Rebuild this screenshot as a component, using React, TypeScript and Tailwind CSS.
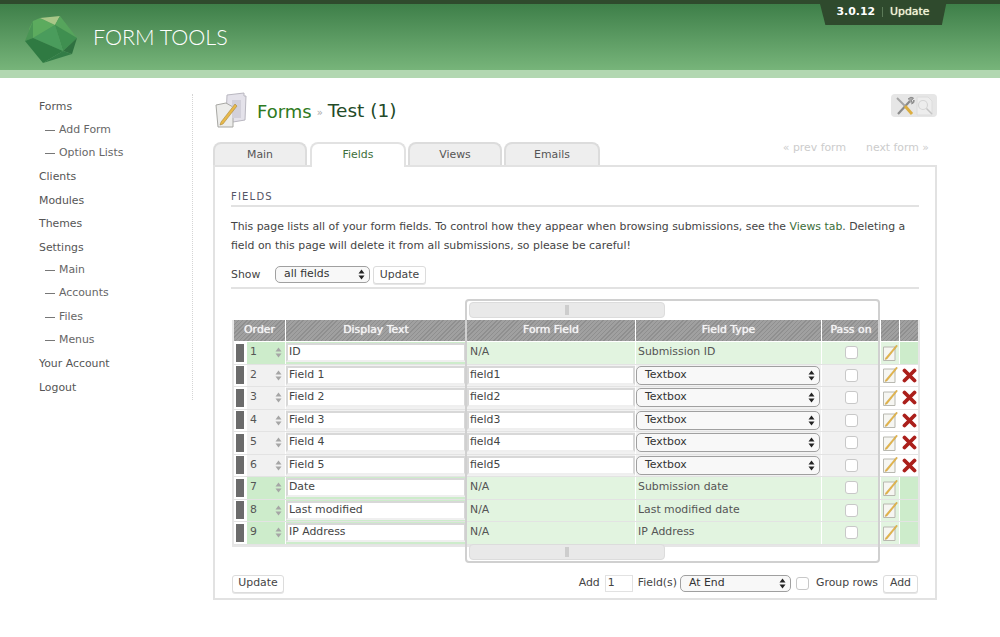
const font = "font-['DejaVu_Sans','Liberation_Sans',sans-serif]";

const navItems = [
  { label: "Forms", sub: false },
  { label: "Add Form", sub: true },
  { label: "Option Lists", sub: true },
  { label: "Clients", sub: false },
  { label: "Modules", sub: false },
  { label: "Themes", sub: false },
  { label: "Settings", sub: false },
  { label: "Main", sub: true },
  { label: "Accounts", sub: true },
  { label: "Files", sub: true },
  { label: "Menus", sub: true },
  { label: "Your Account", sub: false },
  { label: "Logout", sub: false },
];

const rows = [
  { order: 1, text: "ID", field: "N/A", type: "Submission ID", core: true },
  { order: 2, text: "Field 1", field: "field1", type: "Textbox", core: false },
  { order: 3, text: "Field 2", field: "field2", type: "Textbox", core: false },
  { order: 4, text: "Field 3", field: "field3", type: "Textbox", core: false },
  { order: 5, text: "Field 4", field: "field4", type: "Textbox", core: false },
  { order: 6, text: "Field 5", field: "field5", type: "Textbox", core: false },
  { order: 7, text: "Date", field: "N/A", type: "Submission date", core: true },
  { order: 8, text: "Last modified", field: "N/A", type: "Last modified date", core: true },
  { order: 9, text: "IP Address", field: "N/A", type: "IP Address", core: true },
];

const gridCols = "grid grid-cols-[12px_38px_180px_168px_185px_58px_18px_18px] gap-x-[1px]";
const hatch = "bg-[repeating-linear-gradient(135deg,#8f8f8f_0px,#8f8f8f_1px,#a0a0a0_1px,#a0a0a0_3px)]";

const tabs = [
  { label: "Main", className: "mr-[3px] h-[23px] w-[94px] border-[#dcdcdc] bg-[#eeeeee] pt-[2px] text-[#555]" },
  { label: "Fields", className: "relative z-10 -mb-[2px] mr-[2px] h-[25px] w-[96px] border-[#e2e2e2] bg-white text-[#3c6e3a]" },
  { label: "Views", className: "mr-[2px] h-[23px] w-[94px] border-[#dcdcdc] bg-[#eeeeee] pt-[2px] text-[#555]" },
  { label: "Emails", className: "h-[23px] w-[96px] border-[#dcdcdc] bg-[#eeeeee] pt-[2px] text-[#555]" },
];

function Logo() {
  return (
    <svg width="54" height="48" viewBox="0 0 54 48" className="mt-[4px]">
      <polygon points="9,6 16,3 31,10 9,23 5,14" fill="#5cab5e" />
      <polygon points="16,3 36,1 31,10" fill="#a9c788" />
      <polygon points="36,1 53,23 31,10" fill="#56a45c" />
      <polygon points="31,10 53,23 39,36" fill="#3f8f50" />
      <polygon points="31,10 39,36 9,23" fill="#4a9c5c" />
      <polygon points="53,23 48,39 39,36" fill="#2f7140" />
      <polygon points="9,6 9,23 1,26" fill="#4a9555" />
      <polygon points="1,26 9,23 39,36 19,48" fill="#2f7a42" />
      <polygon points="19,48 39,36 48,39" fill="#327c46" />
    </svg>
  );
}

function FormsIcon() {
  return (
    <svg width="36" height="36" viewBox="0 0 36 36">
      <polygon points="14,3 31,1 31,4 33,4 32,28 20,30 13,26" fill="#e4e2ea" stroke="#b9b7c0" />
      <polygon points="3,13 13,11 20,15 20,35 5,35" fill="#ececea" stroke="#a8a8a4" />
      <rect x="19" y="8" width="9" height="18" fill="#d2d0da" />
      <polygon points="8,30 22,12 24,14 10,32 7,33" fill="#e8b94a" stroke="#9c7a2c" strokeWidth="0.5" />
    </svg>
  );
}

function EditIcon() {
  return (
    <svg width="17" height="18" viewBox="0 0 17 18">
      <polygon points="1.5,3 13,3 13,16.5 1.5,16.5" fill="#f6f6f2" stroke="#b8b8b0" />
      <polygon points="3.5,14 14.5,1 15.5,2 5,15 3,15.5" fill="#e6b547" stroke="#b08a35" strokeWidth="0.3" />
    </svg>
  );
}

function DeleteIcon() {
  return (
    <svg width="15" height="15" viewBox="0 0 15 15">
      <path d="M2.5 2.5 L12.5 12.5 M12.5 2.5 L2.5 12.5" stroke="#ab1f1b" strokeWidth="3.8" strokeLinecap="round" />
    </svg>
  );
}

function ToolsIcon() {
  return (
    <svg width="20" height="20" viewBox="0 0 20 20">
      <path d="M3 18 L15 5" stroke="#8a8a8a" strokeWidth="2.2" />
      <path d="M13 3 Q16 0 18.5 2 L16 5 L17.5 6.5 L19 4 Q20 7 16.5 8" stroke="#8a8a8a" strokeWidth="1" fill="#a8a8a8" />
      <path d="M2 2 L10 10" stroke="#a5a5a5" strokeWidth="2" />
      <path d="M10 10 L17 18" stroke="#dcae3f" strokeWidth="3" />
    </svg>
  );
}

function SearchIcon() {
  return (
    <svg width="19" height="20" viewBox="0 0 19 20">
      <polygon points="2,1 13,1 17,5 17,19 2,19" fill="#ededed" stroke="#dcdcdc" />
      <circle cx="8" cy="9" r="4.5" fill="none" stroke="#d5d5d5" strokeWidth="1.2" />
      <path d="M11.5 12.5 L17 18" stroke="#c4c4c4" strokeWidth="1.5" />
    </svg>
  );
}

function SelectArrows({ color = "#222" }: { color?: string }) {
  return (
    <svg width="7" height="11" viewBox="0 0 7 11" className="shrink-0">
      <polygon points="3.5,0.5 6.5,4.5 0.5,4.5" fill={color} />
      <polygon points="3.5,10.5 6.5,6.5 0.5,6.5" fill={color} />
    </svg>
  );
}

function SelectBox({ label, className }: { label: string; className: string }) {
  return (
    <div className={`flex items-center justify-between rounded-[5px] border border-[#a0a0a0] bg-[#f8f8f8] pl-[8px] pr-[4px] text-[#333] ${className}`}>
      <span>{label}</span>
      <SelectArrows />
    </div>
  );
}

function Checkbox() {
  return <div className="h-[13px] w-[13px] rounded-[3px] border border-[#c8c8c8] bg-white" />;
}

function SmallButton({ label, className = "" }: { label: string; className?: string }) {
  return (
    <div className={`flex h-[18px] items-center justify-center rounded-[3px] border border-[#dcdcdc] bg-white text-[#444] shadow-[0_1px_0_#e6e6e6] ${className}`}>
      {label}
    </div>
  );
}

function Sidebar() {
  return (
    <nav className="mt-[16px] flex h-[306px] w-[193px] shrink-0 flex-col border-r border-dotted border-[#d5d5d5] pl-[39px] pt-[2px]">
      {navItems.map((item) => (
        <div key={item.label} className={`flex h-[23.5px] items-center ${item.sub ? "pb-[2px] text-[#666]" : "text-[#555]"}`}>
          {item.sub && <span className="mr-[4px] ml-[6px] h-[1px] w-[10px] bg-[#777]" />}
          {item.label}
        </div>
      ))}
    </nav>
  );
}

function FieldRow({ row }: { row: (typeof rows)[number] }) {
  const bg = row.core ? "bg-[#e2f4e0]" : "bg-[#f1f1f1]";
  const sideBg = row.core ? "bg-[#cdeccb]" : "bg-[#f1f1f1]";
  return (
    <div className={`${gridCols} h-[22.5px] border-b border-[#e3e3e3] text-[#555]`}>
      <div className="flex items-center justify-center bg-white">
        <div className="h-[18px] w-[8px] bg-[#6b6b6b]" />
      </div>
      <div className={`flex items-center justify-between pl-[3px] pr-[3px] ${sideBg}`}>
        <span>{row.order}</span>
        <SelectArrows color="#a5a5a5" />
      </div>
      <div className={`flex items-center ${sideBg}`}>
        <div className="flex h-[19px] w-full items-center border-2 border-[#d8d8d8] border-b-[#efefef] bg-white pl-[1px] text-[#444]">{row.text}</div>
      </div>
      {row.core ? (
        <div className={`flex items-center pl-[3px] ${bg}`}>{row.field}</div>
      ) : (
        <div className={`flex items-center ${bg}`}>
          <div className="flex h-[19px] w-full items-center border-2 border-[#d8d8d8] border-b-[#efefef] bg-white pl-[1px] text-[#444]">{row.field}</div>
        </div>
      )}
      {row.core ? (
        <div className={`flex items-center pl-[2px] ${bg}`}>{row.type}</div>
      ) : (
        <div className={`flex items-center ${bg}`}>
          <SelectBox label={row.type} className="h-[19px] w-[184px]" />
        </div>
      )}
      <div className={`flex items-center justify-center ${bg}`}>
        <Checkbox />
      </div>
      <div className={`flex items-center justify-center ${row.core ? bg : "bg-white"}`}>
        <EditIcon />
      </div>
      <div className={`flex items-center justify-center ${row.core ? sideBg : "bg-white"}`}>
        {!row.core && <DeleteIcon />}
      </div>
    </div>
  );
}

function ScrollTrack() {
  return (
    <div className="flex h-[16px] w-[196px] items-center justify-center rounded-[4px] border border-[#dcdcdc] bg-[#e9e9e9]">
      <div className="h-[10px] w-[4px] bg-[#cdcdcd]" />
    </div>
  );
}

function FieldsTable() {
  const head = `flex items-center justify-center text-[#f4f4f4] [text-shadow:0_0_1px_#ffffff] ${hatch}`;
  return (
    <div className="relative mt-[31px]">
      <div className="ml-[1px] w-[688px] border-2 border-t-0 border-[#e6e6e6]">
        <div className={`${gridCols} h-[21px]`}>
          <div className={`${head} col-span-2`}>Order</div>
          <div className={head}>Display Text</div>
          <div className={head}>Form Field</div>
          <div className={head}>Field Type</div>
          <div className={head}>Pass on</div>
          <div className={head} />
          <div className={head} />
        </div>
        <div className="pt-[1px]">
          {rows.map((row) => (
            <FieldRow key={row.order} row={row} />
          ))}
        </div>
      </div>
      {/* scroll area sits over the middle columns */}
      <div className="pointer-events-none absolute left-[234px] top-[-21px] flex h-[264px] w-[415px] flex-col justify-between rounded-[4px] border-2 border-[#d0d0d0] px-[2px] py-[1px]">
        <ScrollTrack />
        <ScrollTrack />
      </div>
    </div>
  );
}

export default function App() {
  return (
    <div className={`${font} min-h-[637px] bg-white text-[10.88px] leading-none text-[#444]`}>
      <header className="relative h-[78px] border-t-4 border-[#2f4a2d] bg-[linear-gradient(#3e7f49,#7ebb80)]">
        <div className="flex h-[66px] items-center pl-[24px]">
          <Logo />
          <span className="ml-[15px] mt-[1px] font-['Lato','Liberation_Sans',sans-serif] text-[21.5px] font-light text-white">FORM TOOLS</span>
        </div>
        <div className="h-[8px] bg-[#b2d7b1]" />
        <div className="absolute right-[53px] top-[-4px] flex h-[25px] w-[128px] items-center justify-center gap-[7px] bg-[#2f4a2d] pb-[1px] font-bold text-white [clip-path:polygon(0_0,100%_0,96%_100%,5%_100%)]">
          <span>3.0.12</span>
          <span className="h-[10px] w-[1px] bg-[#5c7a58]" />
          <span className="font-normal text-[#f4f6d8] [text-shadow:0_0_1px_#f4f6d8]">Update</span>
        </div>
      </header>

      <div className="flex">
        <Sidebar />
        <main className="ml-[20px] w-[724px]">
          <div className="mt-[14px] flex h-[50px] items-start justify-between">
            <div className="flex items-center">
              <FormsIcon />
              <span className="ml-[8px] mt-[3px] text-[18px] text-[#2f7a22]">Forms</span>
              <span className="mx-[5px] mt-[6px] text-[10px] text-[#aaa]">»</span>
              <span className="mt-[3px] text-[18.5px] text-[#234a28]">Test (1)</span>
            </div>
            <div className="mt-[2px] flex h-[23px] w-[46px] items-center justify-center rounded-[4px] bg-[#e6e6e6]">
              <ToolsIcon />
              <SearchIcon />
            </div>
          </div>

          <div className="flex h-[23px] items-end justify-between">
            <div className="flex">
              {tabs.map((tab) => (
                <div key={tab.label} className={`flex items-center justify-center rounded-t-[8px] border-2 border-b-0 ${tab.className}`}>
                  {tab.label}
                </div>
              ))}
            </div>
            <div className="mb-[11px] flex gap-[20px] pr-[8px] text-[#cccccc]">
              <span>« prev form</span>
              <span>next form »</span>
            </div>
          </div>

          <section className="h-[435px] border-2 border-[#e2e2e2] px-[16px]">
            <div className="flex h-[40px] items-end border-b-2 border-[#e2e2e2] pb-[3px] text-[10px] tracking-[1.2px] text-[#556]">FIELDS</div>
            <p className="mt-[10px] leading-[19px] text-[#444]">
              This page lists all of your form fields. To control how they appear when browsing submissions, see the{" "}
              <span className="text-[#3c6e3a]">Views tab</span>. Deleting a field on this page will delete it from all submissions, so please be careful!
            </p>
            <div className="mt-[11px] flex h-[23px] items-start border-b-2 border-[#e2e2e2]">
              <span className="mt-[4px] w-[44px]">Show</span>
              <SelectBox label="all fields" className="h-[17px] w-[95px]" />
              <SmallButton label="Update" className="ml-[3px] w-[53px]" />
            </div>
            <FieldsTable />
            <div className="mt-[28px] flex items-center pl-[1px] pr-[1px]">
              <SmallButton label="Update" className="w-[52px]" />
              <div className="ml-auto flex items-center">
                <span>Add</span>
                <div className="ml-[5px] flex h-[17px] w-[28px] items-center border border-[#e2e2e2] bg-white pl-[2px]">1</div>
                <span className="ml-[5px]">Field(s)</span>
                <SelectBox label="At End" className="ml-[3px] h-[17px] w-[111px]" />
                <div className="ml-[5px]">
                  <Checkbox />
                </div>
                <span className="ml-[7px]">Group rows</span>
                <SmallButton label="Add" className="ml-[5px] w-[35px]" />
              </div>
            </div>
          </section>
        </main>
      </div>
    </div>
  );
}
